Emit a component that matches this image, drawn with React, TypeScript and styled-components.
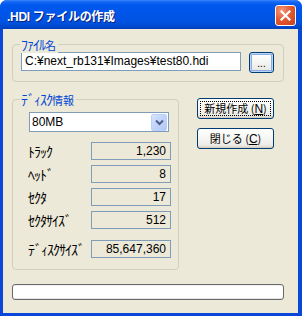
import React from "react";
import styled, { createGlobalStyle } from "styled-components";

const Global = createGlobalStyle`
  html, body { margin: 0; padding: 0; background: #ffffff; }
  body { font-family: "Liberation Sans", "Noto Sans CJK JP", sans-serif; font-size: 12px; }
  * { box-sizing: border-box; }
`;

const Win = styled.div`
  width: 302px;
  height: 316px;
  display: flex;
  flex-direction: column;
  background: #0a47d8;
  border-radius: 7px 7px 0 0;
  overflow: hidden;
`;

const TitleBar = styled.div`
  height: 29px;
  flex: none;
  display: flex;
  align-items: center;
  padding: 0 6px 0 7px;
  background: linear-gradient(
    #3a86ff 0px,
    #1466f4 2px,
    #0058ee 5px,
    #0055e8 14px,
    #0052e0 22px,
    #0047cc 27px,
    #003fbc 29px
  );
`;

const Title = styled.div`
  flex: 1;
  color: #ffffff;
  font-family: "Liberation Sans", "Noto Sans CJK JP", sans-serif;
  font-weight: bold;
  font-size: 12px;
  letter-spacing: -0.3px;
  text-shadow: 1px 1px 0 #0a1f78;
  padding-top: 1px;
`;

const CloseBtn = styled.div`
  width: 21px;
  height: 21px;
  margin-top: 1px;
  border: 1px solid #ffffff;
  border-radius: 3px;
  background: radial-gradient(circle at 30% 25%, #f29b7c 0%, #e35a33 45%, #c8401d 100%);
  display: flex;
  align-items: center;
  justify-content: center;
`;

const Client = styled.div`
  flex: 1;
  margin: 0 4px 3px 3px;
  background: #ece9d8;
  display: flex;
  flex-direction: column;
  padding: 15px 14px 0 9px;
`;

const Group = styled.div<{ $w?: number; $h: number; $pad: string }>`
  position: relative;
  width: ${(p) => (p.$w ? `${p.$w}px` : "auto")};
  height: ${(p) => p.$h}px;
  border: 1px solid #d0d0bf;
  border-radius: 4px;
  padding: ${(p) => p.$pad};
`;

const Legend = styled.span`
  position: absolute;
  top: -9px;
  left: 7px;
  padding: 0 2px 0 1px;
  background: #ece9d8;
  color: #0046d5;
  font-size: 14px;
  letter-spacing: -1px;
  line-height: 16px;
  font-family: "Noto Sans CJK JP", sans-serif;
  white-space: nowrap;
`;

const Kanji = styled.span`
  font-size: 11px;
  letter-spacing: 0;
`;

const FileRow = styled.div`
  display: flex;
  align-items: flex-start;
`;

const TextBox = styled.div`
  width: 220px;
  height: 19px;
  border: 1px solid #7f9db9;
  background: #ffffff;
  padding: 0 3px;
  line-height: 17px;
  font-size: 12px;
  color: #000;
  white-space: nowrap;
`;

const XpButton = styled.div<{ $w: number; $h: number; $hot?: boolean }>`
  width: ${(p) => p.$w}px;
  height: ${(p) => p.$h}px;
  border: 1px solid #003c74;
  border-radius: 3px;
  background: linear-gradient(#ffffff 0%, #f7f7f4 40%, #ecebe6 85%, #d6d0c5 100%);
  box-shadow: ${(p) =>
    p.$hot ? "inset 0 0 0 1px #bcd4f6, inset 0 0 0 2px #89ade4" : "inset 0 -1px 0 #d6d0c5"};
  display: flex;
  align-items: center;
  justify-content: center;
  color: #000;
  font-size: 11px;
  flex: none;
`;

const Focus = styled.span`
  display: flex;
  align-items: center;
  justify-content: center;
  width: calc(100% - 6px);
  height: calc(100% - 6px);
  outline: 1px dotted #000;
`;

const BtnLabel = styled.span`
  font-family: "Noto Sans CJK JP", sans-serif;
  font-size: 11px;
  line-height: 14px;
  white-space: nowrap;
`;

const Mn = styled.span`
  text-decoration: underline;
  font-family: "Liberation Sans", sans-serif;
  font-size: 12px;
`;

const Dots = styled.span`
  font-family: "Liberation Sans", sans-serif;
  font-size: 10px;
  line-height: 10px;
  margin-top: 2px;
`;

const MainRow = styled.div`
  display: flex;
  margin-top: 17px;
`;

const Combo = styled.div`
  width: 140px;
  height: 20px;
  margin-left: 16px;
  border: 1px solid #7f9db9;
  background: #fff;
  display: flex;
  align-items: center;
  padding: 0 1px 0 2px;
`;

const ComboText = styled.span`
  flex: 1;
  font-size: 12px;
  line-height: 16px;
`;

const ComboBtn = styled.div`
  width: 16px;
  height: 17px;
  border-radius: 2px;
  background: linear-gradient(135deg, #d8e4fd 0%, #c1d3fb 50%, #b4c8f6 100%);
  border: 1px solid #bad0fa;
  display: flex;
  align-items: center;
  justify-content: center;
`;

const Fields = styled.div`
  display: grid;
  grid-template-columns: 63px 80px;
  grid-template-rows: 18px 18px 18px 18px 18px;
  row-gap: 5px;
  margin: 10px 0 0 15px;
  align-items: center;
`;

const FieldLabel = styled.span<{ $gap?: number }>`
  font-family: "Noto Sans CJK JP", sans-serif;
  font-size: 14px;
  letter-spacing: -1px;
  line-height: 16px;
  color: #000;
  margin-top: ${(p) => p.$gap ?? 0}px;
  white-space: nowrap;
`;

const ValueBox = styled.div<{ $gap?: number }>`
  height: 18px;
  border: 1px solid #7f9db9;
  background: #ece9d8;
  text-align: right;
  padding-right: 4px;
  line-height: 16px;
  font-size: 12px;
  color: #000;
  margin-top: ${(p) => p.$gap ?? 0}px;
`;

const SideButtons = styled.div`
  display: flex;
  flex-direction: column;
  gap: 9px;
  margin: -1px 0 0 18px;
`;

const Progress = styled.div`
  margin-top: 14px;
  width: 272px;
  height: 16px;
  border: 1px solid #686868;
  border-radius: 3px;
  background: #ffffff;
  box-shadow: inset 0 1px 0 #f0f0f0, inset 0 -1px 0 #e6e6e6;
`;

const rows: [string, string][] = [
  ["ﾄﾗｯｸ", "1,230"],
  ["ﾍｯﾄﾞ", "8"],
  ["ｾｸﾀ", "17"],
  ["ｾｸﾀｻｲｽﾞ", "512"],
  ["ﾃﾞｨｽｸｻｲｽﾞ", "85,647,360"],
];

export default function App() {
  return (
    <>
      <Global />
      <Win>
        <TitleBar>
          <Title>.HDI ファイルの作成</Title>
          <CloseBtn>
            <svg width="11" height="11" viewBox="0 0 11 11">
              <path d="M1.5 1.5 L9.5 9.5 M9.5 1.5 L1.5 9.5" stroke="#fff" strokeWidth="2.2" strokeLinecap="square" />
            </svg>
          </CloseBtn>
        </TitleBar>
        <Client>
          <Group $h={38} $pad="7px 0 0 8px">
            <Legend>
              ﾌｧｲﾙ<Kanji>名</Kanji>
            </Legend>
            <FileRow>
              <TextBox>C:¥next_rb131¥Images¥test80.hdi</TextBox>
              <XpButton $w={25} $h={21} $hot style={{ marginLeft: 8 }}>
                <Dots>...</Dots>
              </XpButton>
            </FileRow>
          </Group>
          <MainRow>
            <Group $w={167} $h={171} $pad="12px 0 0 0">
              <Legend>
                ﾃﾞｨｽｸ<Kanji>情報</Kanji>
              </Legend>
              <Combo>
                <ComboText>80MB</ComboText>
                <ComboBtn>
                  <svg width="9" height="7" viewBox="0 0 9 7">
                    <path d="M1 1.5 L4.5 5 L8 1.5" stroke="#4d6185" strokeWidth="2" fill="none" />
                  </svg>
                </ComboBtn>
              </Combo>
              <Fields>
                {rows.map(([l, v], i) => (
                  <React.Fragment key={l}>
                    <FieldLabel $gap={i === 4 ? 12 : 0}>{l}</FieldLabel>
                    <ValueBox $gap={i === 4 ? 12 : 0}>{v}</ValueBox>
                  </React.Fragment>
                ))}
              </Fields>
            </Group>
            <SideButtons>
              <XpButton $w={77} $h={21}>
                <Focus>
                  <BtnLabel>
                    新規作成 (<Mn>N</Mn>)
                  </BtnLabel>
                </Focus>
              </XpButton>
              <XpButton $w={77} $h={21}>
                <BtnLabel>
                  閉じる (<Mn>C</Mn>)
                </BtnLabel>
              </XpButton>
            </SideButtons>
          </MainRow>
          <Progress />
        </Client>
      </Win>
    </>
  );
}
